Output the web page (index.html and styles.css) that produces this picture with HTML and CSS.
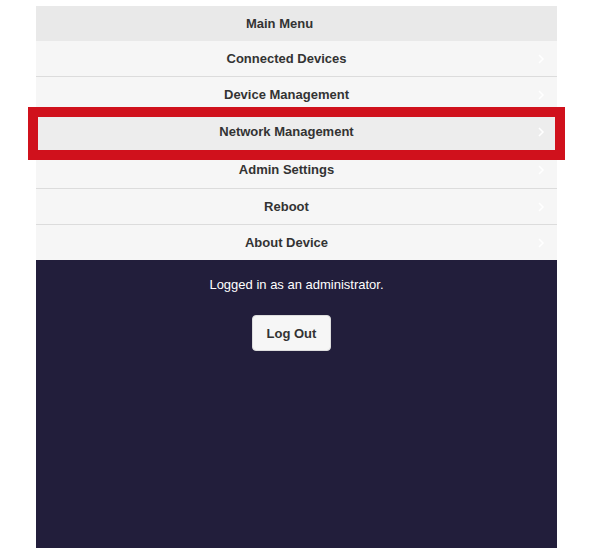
FILE: index.html
```html
<!DOCTYPE html>
<html>
<head>
<meta charset="utf-8">
<link rel="stylesheet" href="styles.css">
</head>
<body>
<div class="panel">
  <div class="menu-header">Main Menu</div>
  <ul class="menu">
    <li class="item"><span>Connected Devices</span><svg class="chev" viewBox="0 0 8 12"><path d="M2 2 L6 6 L2 10" /></svg></li>
    <li class="item"><span>Device Management</span><svg class="chev" viewBox="0 0 8 12"><path d="M2 2 L6 6 L2 10" /></svg></li>
    <li class="item item-active"><span>Network Management</span><svg class="chev" viewBox="0 0 8 12"><path d="M2 2 L6 6 L2 10" /></svg><div class="highlight"></div></li>
    <li class="item item-tall"><span>Admin Settings</span><svg class="chev" viewBox="0 0 8 12"><path d="M2 2 L6 6 L2 10" /></svg></li>
    <li class="item"><span>Reboot</span><svg class="chev" viewBox="0 0 8 12"><path d="M2 2 L6 6 L2 10" /></svg></li>
    <li class="item item-last"><span>About Device</span><svg class="chev" viewBox="0 0 8 12"><path d="M2 2 L6 6 L2 10" /></svg></li>
  </ul>
  <div class="footer">
    <p class="status">Logged in as an administrator.</p>
    <button class="logout">Log Out</button>
  </div>
</div>
</body>
</html>
```

FILE: styles.css
```css
html, body {
  margin: 0;
  padding: 0;
  background: #ffffff;
  font-family: "Liberation Sans", Arial, sans-serif;
}
.panel {
  width: 521px;
  margin: 6px 0 0 36px;
  display: flex;
  flex-direction: column;
}
.menu-header {
  height: 35px;
  background: #e9e9e9;
  color: #333333;
  font-weight: bold;
  font-size: 13px;
  display: flex;
  align-items: center;
  justify-content: center;
  padding: 0 34px 1px 0;
  box-sizing: border-box;
}
.menu {
  list-style: none;
  margin: 0;
  padding: 0;
}
.item {
  position: relative;
  height: 35px;
  background: #f6f6f6;
  border-bottom: 1px solid #dcdcdc;
  color: #333333;
  font-weight: bold;
  font-size: 13px;
  display: flex;
  align-items: center;
  justify-content: center;
  padding-right: 20px;
}
.item-active {
  height: 37px;
  background: #ededed;
  border-bottom-color: #ededed;
}
.item-tall {
  height: 37px;
}
.item-last {
  border-bottom: none;
  height: 35px;
}
.chev {
  position: absolute;
  right: 12px;
  top: 50%;
  width: 8px;
  height: 12px;
  margin-top: -6px;
}
.chev path {
  fill: none;
  stroke: #ffffff;
  stroke-width: 1.5;
}
.highlight {
  position: absolute;
  z-index: 1;
  left: -8px;
  right: -8px;
  top: -6px;
  bottom: -10px;
  border: 10px solid #d0111c;
  pointer-events: none;
}
.footer {
  background: #221e3b;
  height: 288px;
  display: flex;
  flex-direction: column;
  align-items: center;
}
.status {
  margin: 17px 0 0;
  color: #ffffff;
  font-size: 13px;
}
.logout {
  margin: 23px 10px 0 0;
  width: 79px;
  height: 36px;
  background: #f6f6f6;
  border: 1px solid #dddddd;
  border-radius: 4px;
  color: #333333;
  font-family: "Liberation Sans", Arial, sans-serif;
  font-weight: bold;
  font-size: 13px;
  padding: 0;
}
```
